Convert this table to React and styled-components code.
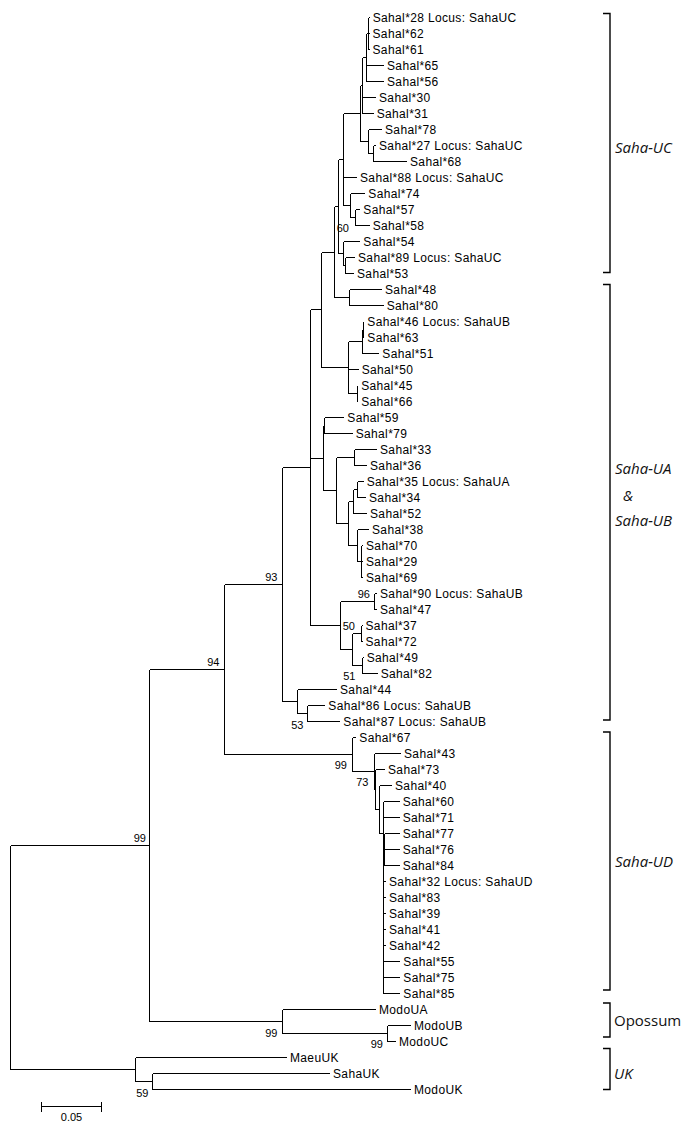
import React from "react";
import styled, { createGlobalStyle } from "styled-components";

const GlobalStyle = createGlobalStyle`
  html, body {
    margin: 0;
    padding: 0;
    background: #ffffff;
  }
`;

const Page = styled.div`
  width: 691px;
  height: 1133px;
  background: #ffffff;
  overflow: hidden;
`;

const Figure = styled.svg`
  display: block;
`;

const Branches = styled.path`
  fill: none;
  stroke: #000;
  stroke-width: 1;
  shape-rendering: crispEdges;
`;

const TaxonLabel = styled.text`
  font-family: "Liberation Sans", Arial, sans-serif;
  font-size: 12px;
  letter-spacing: 0.35px;
  fill: #000;
`;

const SupportLabel = styled.text`
  font-family: "Liberation Sans", Arial, sans-serif;
  font-size: 11px;
  text-anchor: end;
  fill: #000;
`;

const Bracket = styled.path`
  fill: none;
  stroke: #000;
  stroke-width: 1.4;
`;

const CladeName = styled.text`
  font-family: "Open Sans", "Noto Sans", sans-serif;
  font-size: 15px;
  font-style: ${(p) => (p.$italic ? "italic" : "normal")};
  fill: #111;
`;

const ScaleText = styled.text`
  font-family: "Liberation Sans", Arial, sans-serif;
  font-size: 11px;
  text-anchor: middle;
  fill: #000;
`;

// leaf: branch end x; node: x, children, optional forced y
const L = (name, end) => ({ name, end });
const N = (x, children, y) => ({ x, children, y });

const tree = N(10, [
  N(149.3, [
    N(224.3, [
      N(281.7, [
        N(310, [
          N(320.7, [
            N(334, [
              N(337.7, [
                N(343.3, [
                  N(360, [
                    N(362.3, [
                      N(366, [
                        N(367.5, [
                          L("Sahal*28 Locus: SahaUC", 368.7),
                          L("Sahal*62", 368.5),
                          L("Sahal*61", 368.5),
                        ]),
                        L("Sahal*65", 383),
                        L("Sahal*56", 383),
                      ]),
                      L("Sahal*30", 375),
                      L("Sahal*31", 372.7),
                    ]),
                    N(368.3, [
                      L("Sahal*78", 381),
                      N(372.7, [L("Sahal*27 Locus: SahaUC", 375), L("Sahal*68", 406)]),
                    ]),
                  ]),
                  L("Sahal*88 Locus: SahaUC", 356),
                  N(350, [
                    L("Sahal*74", 364.3),
                    N(355, [L("Sahal*57", 359.3), L("Sahal*58", 368.7)]),
                  ]),
                ]),
                N(343.3, [
                  L("Sahal*54", 359.3),
                  N(344.5, [L("Sahal*89 Locus: SahaUC", 354), L("Sahal*53", 353)]),
                ]),
              ]),
              N(349.3, [L("Sahal*48", 381), L("Sahal*80", 382.7)]),
            ]),
            N(348.3, [
              N(361.7, [
                N(362.5, [L("Sahal*46 Locus: SahaUB", 363.3), L("Sahal*63", 363.3)]),
                L("Sahal*51", 378.3),
              ]),
              L("Sahal*50", 357.7),
              N(356.7, [L("Sahal*45", 357.2), L("Sahal*66", 357.2)]),
            ]),
          ]),
          N(322.7, [
            N(323.5, [L("Sahal*59", 343.3), L("Sahal*79", 351.7)]),
            N(336, [
              N(354.3, [L("Sahal*33", 376), L("Sahal*36", 366)]),
              N(347.7, [
                N(352.7, [
                  N(357.3, [L("Sahal*35 Locus: SahaUA", 362.7), L("Sahal*34", 365)]),
                  L("Sahal*52", 366),
                ]),
                N(356.7, [
                  L("Sahal*38", 368),
                  N(361, [L("Sahal*70", 362), L("Sahal*29", 362), L("Sahal*69", 362)]),
                ]),
              ]),
            ]),
          ]),
          N(340, [
            N(374.3, [L("Sahal*90 Locus: SahaUB", 376), L("Sahal*47", 376)]),
            N(352.3, [
              N(360.7, [L("Sahal*37", 361.5), L("Sahal*72", 361.5)]),
              N(361.7, [L("Sahal*49", 362.7), L("Sahal*82", 376.7)]),
            ]),
          ]),
        ]),
        N(296.7, [
          L("Sahal*44", 336),
          N(307.3, [L("Sahal*86 Locus: SahaUB", 324.3), L("Sahal*87 Locus: SahaUB", 339.3)]),
        ]),
      ]),
      N(351.7, [
        L("Sahal*67", 355.3),
        N(374.3, [
          L("Sahal*43", 400),
          N(375.3, [
            L("Sahal*73", 384),
            N(379.3, [
              L("Sahal*40", 391),
              N(
                382.7,
                [
                  L("Sahal*60", 398.7),
                  L("Sahal*71", 398.7),
                  N(383.7, [L("Sahal*77", 398.7), L("Sahal*76", 398.7), L("Sahal*84", 398.7)]),
                  L("Sahal*32 Locus: SahaUD", 385),
                  L("Sahal*83", 385),
                  L("Sahal*39", 385),
                  L("Sahal*41", 385),
                  N(383.2, [
                    L("Sahal*42", 385),
                    L("Sahal*55", 399.3),
                    L("Sahal*75", 399.3),
                    L("Sahal*85", 399.3),
                  ]),
                ],
                833
              ),
            ]),
          ]),
        ]),
      ]),
    ]),
    N(281.7, [L("ModoUA", 375), N(386.7, [L("ModoUB", 410), L("ModoUC", 395)])]),
  ]),
  N(135.3, [L("MaeuUK", 286), N(152.3, [L("SahaUK", 329), L("ModoUK", 410)])]),
]);

const supports = [
  { v: "60", x: 349, y: 232 },
  { v: "93", x: 277.5, y: 581 },
  { v: "96", x: 370, y: 598 },
  { v: "50", x: 355, y: 629.5 },
  { v: "51", x: 355.5, y: 680 },
  { v: "94", x: 219.5, y: 666 },
  { v: "53", x: 303.5, y: 728.5 },
  { v: "99", x: 347, y: 768.5 },
  { v: "73", x: 368.5, y: 786 },
  { v: "99", x: 146, y: 842 },
  { v: "99", x: 277.5, y: 1037 },
  { v: "99", x: 383, y: 1048 },
  { v: "59", x: 148.5, y: 1097 },
];

const clades = [
  { top: 13.5, bottom: 272.5 },
  { top: 284.5, bottom: 720 },
  { top: 732, bottom: 990 },
  { top: 1003, bottom: 1037 },
  { top: 1048.5, bottom: 1089.5 },
];

const cladeNames = [
  { text: "Saha-UC", x: 615, y: 153, italic: true },
  { text: "Saha-UA", x: 615, y: 474, italic: true },
  { text: "&", x: 623, y: 501, italic: true },
  { text: "Saha-UB", x: 615, y: 526, italic: true },
  { text: "Saha-UD", x: 615, y: 867, italic: true },
  { text: "Opossum", x: 614, y: 1026, italic: false },
  { text: "UK", x: 614, y: 1079, italic: true },
];

const px = (v) => Math.round(v) + 0.5;

function layout(node, state) {
  if (!node.children) {
    node.yy = 17 + 16 * state.i;
    state.i += 1;
    state.leaves.push(node);
    return;
  }
  node.children.forEach((c) => layout(c, state));
  const first = node.children[0].yy;
  const last = node.children[node.children.length - 1].yy;
  node.yy = node.y ?? (first + last) / 2;
}

function collect(node, segs) {
  if (!node.children) return;
  const ys = node.children.map((c) => c.yy).concat(node.yy);
  segs.push(`M${px(node.x)} ${px(Math.min(...ys))}V${px(Math.max(...ys))}`);
  node.children.forEach((c) => {
    const endX = c.children ? c.x : c.end;
    segs.push(`M${px(node.x)} ${px(c.yy)}H${px(endX)}`);
    collect(c, segs);
  });
}

const state = { i: 0, leaves: [] };
layout(tree, state);
const segs = [];
collect(tree, segs);
const branchPath = segs.join("");

export default function App() {
  return (
    <Page>
      <GlobalStyle />
      <Figure width="691" height="1133" viewBox="0 0 691 1133">
        <Branches d={branchPath} />
        {state.leaves.map((leaf) => (
          <TaxonLabel key={leaf.name} x={leaf.end + 4} y={leaf.yy + 4.5}>
            {leaf.name}
          </TaxonLabel>
        ))}
        {supports.map((s, i) => (
          <SupportLabel key={i} x={s.x} y={s.y}>
            {s.v}
          </SupportLabel>
        ))}
        {clades.map((c, i) => (
          <Bracket key={i} d={`M603 ${c.top}H610V${c.bottom}H603`} />
        ))}
        {cladeNames.map((c) => (
          <CladeName key={c.text} x={c.x} y={c.y} $italic={c.italic}>
            {c.text}
          </CladeName>
        ))}
        <Branches d="M41.5 1106.5H101.5M41.5 1101.5V1111.5M101.5 1101.5V1111.5" />
        <ScaleText x="71.5" y="1121">
          0.05
        </ScaleText>
      </Figure>
    </Page>
  );
}
